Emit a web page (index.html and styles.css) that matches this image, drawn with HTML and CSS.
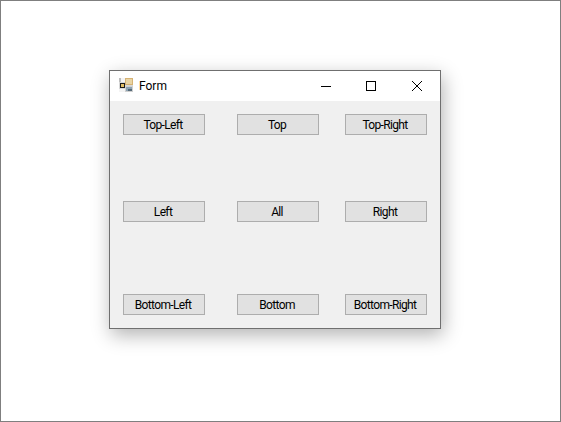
FILE: index.html
```html
<!DOCTYPE html>
<html lang="en">
<head>
<meta charset="utf-8">
<title>Form</title>
<link rel="stylesheet" href="styles.css">
</head>
<body>
<div class="stage">
  <div class="window">
    <div class="titlebar">
      <svg class="app-icon" width="16" height="16" viewBox="0 0 16 16">
        <rect x="0" y="0" width="14" height="14" fill="#d8d8d8"/>
        <rect x="0" y="0" width="2" height="4" fill="#bdbdbd"/>
        <rect x="2" y="0" width="4" height="4" fill="#f4f4f4"/>
        <rect x="1" y="5" width="5" height="5" fill="#1c1c1c"/>
        <rect x="2" y="6" width="3" height="3" fill="#e4c068"/>
        <rect x="0" y="11" width="6" height="3" fill="#f4f4f4"/>
        <rect x="6" y="0" width="8" height="7" fill="#d6b273"/>
        <rect x="7" y="1" width="6" height="5" fill="#e9d4a4"/>
        <rect x="6" y="8" width="8" height="6" fill="#d0d0d0"/>
        <rect x="7" y="9" width="6" height="4" fill="#8ea3b3"/>
        <rect x="9" y="11" width="4" height="2" fill="#566a78"/>
      </svg>
      <span class="title">Form</span>
      <div class="controls">
        <div class="ctl"><svg width="12" height="12" viewBox="0 0 12 12"><path d="M2 6.5H12" stroke="#000" fill="none"/></svg></div>
        <div class="ctl"><svg width="12" height="12" viewBox="0 0 12 12"><rect x="1.5" y="1.5" width="9" height="9" stroke="#000" fill="none"/></svg></div>
        <div class="ctl"><svg width="12" height="12" viewBox="0 0 12 12"><path d="M1 1L11 11M11 1L1 11" stroke="#000" fill="none"/></svg></div>
      </div>
    </div>
    <div class="client">
      <div class="btn">Top-Left</div>
      <div class="btn">Top</div>
      <div class="btn">Top-Right</div>
      <div class="btn">Left</div>
      <div class="btn">All</div>
      <div class="btn">Right</div>
      <div class="btn">Bottom-Left</div>
      <div class="btn">Bottom</div>
      <div class="btn">Bottom-Right</div>
    </div>
  </div>
</div>
</body>
</html>
```
FILE: styles.css
```css
html, body {
  margin: 0;
  height: 100%;
  background: #fff;
}
.stage {
  box-sizing: border-box;
  width: 561px;
  height: 422px;
  border: 1px solid #7f7f7f;
  padding: 69px 0 0 108px;
  background: #fff;
  overflow: hidden;
}
.window {
  box-sizing: border-box;
  width: 332px;
  height: 259px;
  border: 1px solid #6f6f6f;
  background: #f0f0f0;
  box-shadow: 2px 6px 18px rgba(0, 0, 0, 0.3);
  font-family: Roboto, "Liberation Sans", sans-serif;
  font-size: 12px;
  color: #000;
}
.titlebar {
  display: flex;
  align-items: center;
  height: 30px;
  background: #fff;
  padding-left: 9px;
}
.app-icon {
  flex: none;
}
.title {
  margin-left: 4px;
}
.controls {
  display: flex;
  margin-left: auto;
}
.ctl {
  display: flex;
  align-items: center;
  justify-content: center;
  width: 46px;
  height: 28px;
}
.client {
  display: grid;
  grid-template-columns: 82px 82px 82px;
  grid-template-rows: 21px 21px 21px;
  column-gap: 32px;
  row-gap: 66px;
  padding: 13px 0 0 13px;
  background: #f0f0f0;
}
.client .btn:nth-child(3n) {
  margin-left: -6px;
  margin-right: 6px;
}
.client .btn:nth-child(n+7) {
  margin-top: 6px;
  margin-bottom: -6px;
}
.btn {
  box-sizing: border-box;
  display: flex;
  align-items: center;
  justify-content: center;
  padding-right: 2px;
  border: 1px solid #adadad;
  background: #e1e1e1;
  letter-spacing: -0.65px;
  white-space: nowrap;
}
```
